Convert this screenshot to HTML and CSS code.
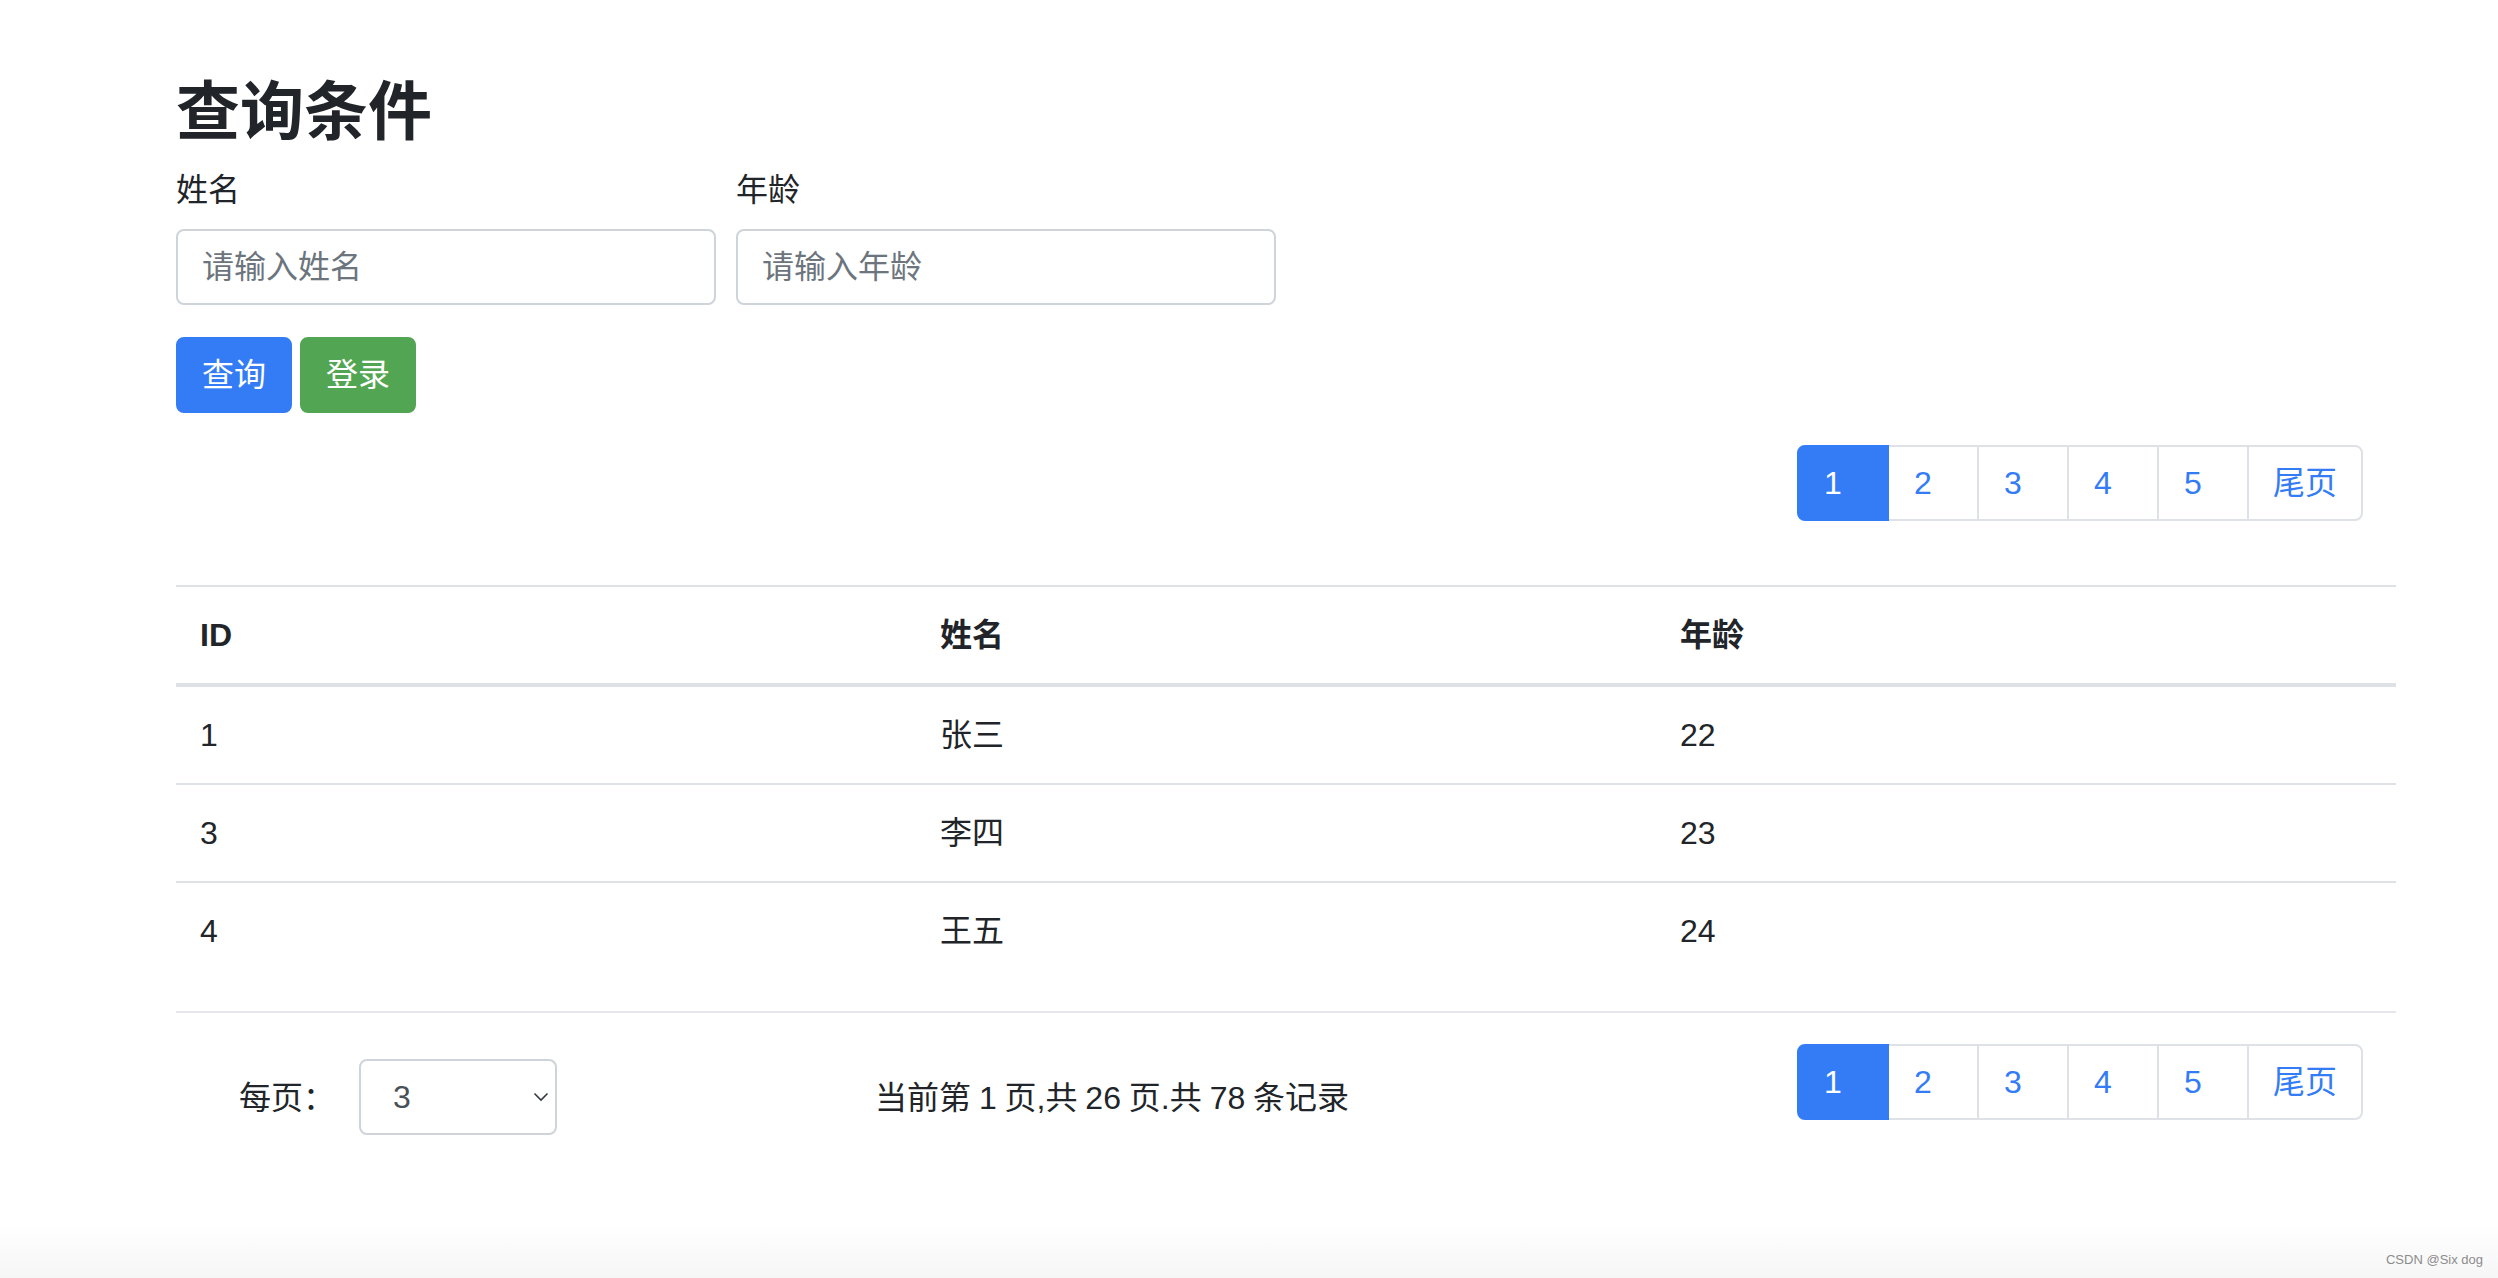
FILE: index.html
```html
<!DOCTYPE html>
<html lang="zh-CN">
<head>
<meta charset="utf-8">
<title>查询条件</title>
<link rel="stylesheet" href="styles.css">
</head>
<body>
<div class="page">
  <h2 class="title">查询条件</h2>
  <form class="search">
    <div class="fields">
      <div class="field">
        <label class="label">姓名</label>
        <input class="input" type="text" placeholder="请输入姓名">
      </div>
      <div class="field">
        <label class="label">年龄</label>
        <input class="input" type="text" placeholder="请输入年龄">
      </div>
    </div>
    <div class="actions">
      <button type="button" class="btn btn-primary">查询</button>
      <button type="button" class="btn btn-success">登录</button>
    </div>
  </form>

  <div class="pager-row">
    <ul class="pagination">
      <li class="page-item active"><a class="page-link" href="#">1</a></li>
      <li class="page-item"><a class="page-link" href="#">2</a></li>
      <li class="page-item"><a class="page-link" href="#">3</a></li>
      <li class="page-item"><a class="page-link" href="#">4</a></li>
      <li class="page-item"><a class="page-link" href="#">5</a></li>
      <li class="page-item"><a class="page-link" href="#">尾页</a></li>
    </ul>
  </div>

  <table class="table">
    <thead>
      <tr><th>ID</th><th>姓名</th><th>年龄</th></tr>
    </thead>
    <tbody>
      <tr><td>1</td><td>张三</td><td>22</td></tr>
      <tr><td>3</td><td>李四</td><td>23</td></tr>
      <tr><td>4</td><td>王五</td><td>24</td></tr>
    </tbody>
  </table>

  <hr class="divider">

  <div class="footer-row">
    <div class="per-page">
      <span class="per-label">每页：</span>
      <div class="select-wrap">
        <select class="select">
          <option>3</option>
          <option>5</option>
          <option>10</option>
        </select>
        <svg class="chev" width="16" height="10" viewBox="0 0 16 10"><path d="M1.5 1.5 L8 8 L14.5 1.5" fill="none" stroke="#343a40" stroke-width="1.6"/></svg>
      </div>
    </div>
    <div class="summary">当前第 1 页,共 26 页.共 78 条记录</div>
    <ul class="pagination">
      <li class="page-item active"><a class="page-link" href="#">1</a></li>
      <li class="page-item"><a class="page-link" href="#">2</a></li>
      <li class="page-item"><a class="page-link" href="#">3</a></li>
      <li class="page-item"><a class="page-link" href="#">4</a></li>
      <li class="page-item"><a class="page-link" href="#">5</a></li>
      <li class="page-item"><a class="page-link" href="#">尾页</a></li>
    </ul>
  </div>
</div>
<div class="fade"></div>
<div class="watermark">CSDN @Six dog</div>
</body>
</html>
```

FILE: styles.css
```css
* { box-sizing: border-box; }
html, body { margin: 0; padding: 0; background: #fff; }
body {
  font-family: "Liberation Sans", "Noto Sans CJK SC", sans-serif;
  font-size: 32px;
  line-height: 48px;
  color: #212529;
  height: 1278px;
  position: relative;
  overflow: hidden;
}
.page { width: 2220px; margin-left: 176px; padding-top: 74px; }
.title { margin: 0 0 16px; font-size: 64px; line-height: 76px; font-weight: 700; }

.fields { display: flex; gap: 20px; margin-bottom: 32px; }
.field { width: 540px; }
.label { display: block; margin-bottom: 15px; }
.input {
  display: block; width: 100%; height: 76px; padding: 12px 24px;
  font: inherit; color: #495057; background: #fff;
  border: 2px solid #ced4da; border-radius: 8px; outline: none;
}
.input::placeholder { color: #6c757d; }

.actions { display: flex; gap: 8px; margin-bottom: 32px; }
.btn {
  height: 76px; padding: 12px 24px; font: inherit; color: #fff;
  border: 2px solid transparent; border-radius: 8px; cursor: pointer;
}
.btn-primary { background: #337cf6; border-color: #337cf6; }
.btn-success { background: #52a552; border-color: #52a552; }

.pager-row { display: flex; justify-content: flex-end; padding-right: 33px; }
.pagination { display: flex; list-style: none; margin: 0 0 32px; padding: 0; }
.page-item { margin-left: -2px; }
.page-item:first-child { margin-left: 0; }
.page-link {
  display: block; min-width: 92px; height: 76px; padding: 16px 24px 16px 25px;
  line-height: 40px; color: #337cf6; background: #fff; text-decoration: none;
  border: 2px solid #dee2e6;
}
.page-item:last-child .page-link { padding: 16px 24px; }
.page-item:first-child .page-link { border-radius: 8px 0 0 8px; }
.page-item:last-child .page-link { border-radius: 0 8px 8px 0; }
.page-item.active .page-link { background: #337cf6; border-color: #337cf6; color: #fff; position: relative; z-index: 1; }

.table {
  width: 100%; table-layout: fixed; border-collapse: separate; border-spacing: 0;
  margin: 32px 0 32px;
}
.table th, .table td {
  padding: 24px; line-height: 48px; text-align: left; vertical-align: top;
  border-top: 2px solid #dee2e6;
}
.table th { font-weight: 700; border-bottom: 4px solid #dee2e6; }
.table tbody tr:first-child td { border-top: 0; }

.divider { height: 0; margin: 0 0 31px; border: 0; border-top: 2px solid #e6e7eb; }

.footer-row { display: flex; align-items: center; }
.footer-row .pagination { margin-right: 33px; }
.per-page { flex: 0 0 699px; display: flex; align-items: center; padding-left: 63px; }
.per-label { margin-right: 24px; }
.select-wrap { position: relative; width: 198px; height: 76px; margin-top: -3px; }
.select {
  width: 100%; height: 76px; padding: 0 32px; font: inherit; color: #495057;
  background: #fff; border: 2px solid #ced4da; border-radius: 8px;
  appearance: none; -webkit-appearance: none; outline: none;
}
.chev { position: absolute; right: 8px; top: 33px; pointer-events: none; }
.summary { flex: 1; word-spacing: -1px; }

.fade {
  position: absolute; left: 0; right: 0; bottom: 0; height: 56px;
  background: linear-gradient(to bottom, rgba(246,246,246,0), #f6f6f6);
}
.watermark {
  position: absolute; right: 15px; bottom: 10px;
  font-family: "Liberation Sans", sans-serif; font-size: 13px; line-height: 16px; color: #8c8c8c;
}
```
